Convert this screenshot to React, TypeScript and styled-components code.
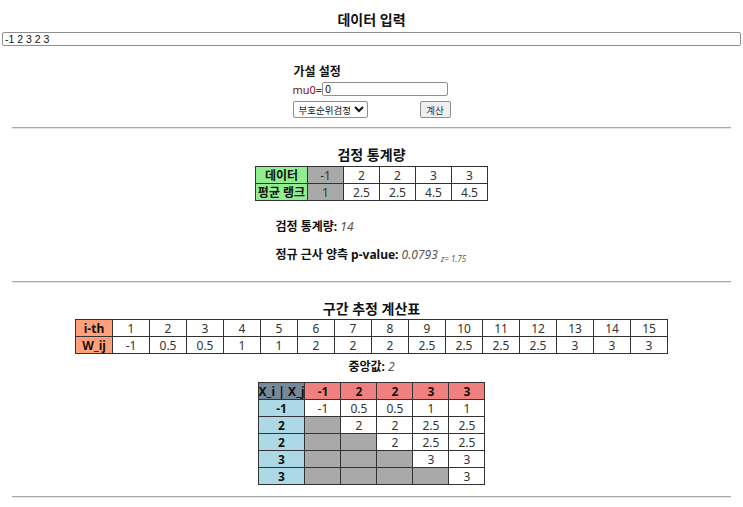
import styled, { createGlobalStyle } from "styled-components";

const GlobalStyle = createGlobalStyle`
  html, body {
    margin: 0;
    padding: 0;
    background: #fff;
  }
  body {
    font-family: "Noto Sans", "Noto Sans CJK KR", sans-serif;
    font-size: 12px;
    color: #111;
  }
`;

const Page = styled.div`
  padding: 0 2px;
`;

const Title = styled.h3<{ $top: number }>`
  margin: ${(p) => p.$top}px 0 0;
  font-size: 14px;
  line-height: 18px;
  text-align: center;
  font-weight: 700;
`;

const DataInput = styled.input`
  display: block;
  box-sizing: border-box;
  width: 100%;
  height: 14px;
  margin: 3px 0 0;
  padding: 0 2px;
  border: 1px solid #8f8f8f;
  border-radius: 2px;
  font-family: "Liberation Sans", sans-serif;
  font-size: 10.5px;
  color: #111;
`;

const Hypothesis = styled.div`
  width: 158px;
  margin: 18px auto 0;
  display: flex;
  flex-direction: column;
`;

const SubTitle = styled.div`
  font-weight: 700;
  font-size: 12px;
  line-height: 16px;
  padding-left: 1px;
`;

const MuRow = styled.label`
  display: flex;
  align-items: center;
  height: 16px;
  margin-top: 1px;
  color: #7a1010;
  font-size: 11px;
`;

const MuInput = styled.input`
  box-sizing: border-box;
  width: 126px;
  height: 14px;
  padding: 0 2px;
  border: 1px solid #8f8f8f;
  border-radius: 2px;
  font-family: "Liberation Sans", sans-serif;
  font-size: 10px;
`;

const ActionRow = styled.div`
  display: flex;
  justify-content: space-between;
  align-items: center;
  margin-top: 4px;
`;

const MethodSelect = styled.select`
  width: 75px;
  height: 17px;
  padding: 0 1px;
  border: 1px solid #8f8f8f;
  border-radius: 2px;
  background: #fff;
  font-family: "Noto Sans CJK KR", sans-serif;
  font-size: 9.5px;
  color: #111;
`;

const CalcButton = styled.button`
  width: 31px;
  height: 17px;
  padding: 0;
  border: 1px solid #8f8f8f;
  border-radius: 2px;
  background: #efefef;
  font-family: "Noto Sans CJK KR", sans-serif;
  font-size: 9.5px;
  color: #333;
`;

const Rule = styled.hr<{ $top: number }>`
  margin: ${(p) => p.$top}px 10px 0;
  border: 0;
  border-top: 1px solid #a8a8a8;
  border-bottom: 1px solid #e4e4e4;
`;

const Table = styled.table<{ $top: number }>`
  margin: ${(p) => p.$top}px auto 0;
  border-collapse: collapse;
  table-layout: fixed;
  border: 1px solid #666;
`;

const Cell = styled.td<{ $w: number; $bg?: string; $bold?: boolean }>`
  width: ${(p) => p.$w}px;
  height: 17px;
  padding: 0;
  box-sizing: border-box;
  border: 1px solid #333;
  background: ${(p) => p.$bg ?? "#fff"};
  font-weight: ${(p) => (p.$bold ? 700 : 400)};
  color: ${(p) => (p.$bold ? "#111" : "#333")};
  font-size: 12px;
  line-height: 15px;
  text-align: center;
  white-space: nowrap;
`;

const Stats = styled.div`
  width: 194px;
  margin: 18px auto 0;
  padding-left: 2px;
`;

const StatLine = styled.div<{ $top?: number }>`
  margin-top: ${(p) => p.$top ?? 0}px;
  line-height: 16px;
  font-size: 12px;
`;

const Label = styled.b`
  font-weight: 700;
`;

const Value = styled.i`
  color: #555;
  font-style: italic;
`;

const Small = styled.sub`
  font-size: 8px;
  color: #555;
  font-style: italic;
  vertical-align: -3px;
  margin-left: 3px;
`;

const Median = styled.div`
  margin-top: 5px;
  text-align: center;
  line-height: 16px;
  font-size: 12px;
`;

const GRAY = "#a9a9a9";
const GREEN = "#90ee90";
const SALMON = "#ffa07a";
const CORAL = "#f08080";
const BLUE = "#add8e6";
const SLATE = "#778899";

const data = [-1, 2, 2, 3, 3];
const ranks = [1, 2.5, 2.5, 4.5, 4.5];

const walsh: number[] = [];
data.forEach((a, i) => {
  data.forEach((b, j) => {
    if (j >= i) walsh.push((a + b) / 2);
  });
});
walsh.sort((a, b) => a - b);

export default function App() {
  return (
    <Page>
      <GlobalStyle />
      <Title $top={11}>데이터 입력</Title>
      <DataInput defaultValue="-1 2 3 2 3" />

      <Hypothesis>
        <SubTitle>가설 설정</SubTitle>
        <MuRow>
          mu0=
          <MuInput defaultValue="0" />
        </MuRow>
        <ActionRow>
          <MethodSelect defaultValue="signed">
            <option value="signed">부호순위검정</option>
            <option value="sign">부호검정</option>
          </MethodSelect>
          <CalcButton>계산</CalcButton>
        </ActionRow>
      </Hypothesis>

      <Rule $top={9} />

      <Title $top={17}>검정 통계량</Title>
      <Table $top={2}>
        <tbody>
          <tr>
            <Cell $w={52} $bg={GREEN} $bold>
              데이터
            </Cell>
            {data.map((v, i) => (
              <Cell key={i} $w={36} $bg={i === 0 ? GRAY : undefined}>
                {v}
              </Cell>
            ))}
          </tr>
          <tr>
            <Cell $w={52} $bg={GREEN} $bold>
              평균 랭크
            </Cell>
            {ranks.map((v, i) => (
              <Cell key={i} $w={36} $bg={i === 0 ? GRAY : undefined}>
                {v}
              </Cell>
            ))}
          </tr>
        </tbody>
      </Table>

      <Stats>
        <StatLine>
          <Label>검정 통계량:</Label> <Value>14</Value>
        </StatLine>
        <StatLine $top={12}>
          <Label>정규 근사 양측 p-value:</Label> <Value>0.0793</Value>
          <Small>z= 1.75</Small>
        </StatLine>
      </Stats>

      <Rule $top={14} />

      <Title $top={17}>구간 추정 계산표</Title>
      <Table $top={1}>
        <tbody>
          <tr>
            <Cell $w={37} $bg={SALMON} $bold>
              i-th
            </Cell>
            {walsh.map((_, i) => (
              <Cell key={i} $w={37}>
                {i + 1}
              </Cell>
            ))}
          </tr>
          <tr>
            <Cell $w={37} $bg={SALMON} $bold>
              W_ij
            </Cell>
            {walsh.map((v, i) => (
              <Cell key={i} $w={37}>
                {v}
              </Cell>
            ))}
          </tr>
        </tbody>
      </Table>

      <Median>
        <Label>중앙값:</Label> <Value>2</Value>
      </Median>

      <Table $top={7}>
        <tbody>
          <tr>
            <Cell $w={46} $bg={SLATE} $bold>
              X_i | X_j
            </Cell>
            {data.map((v, i) => (
              <Cell key={i} $w={36} $bg={CORAL} $bold>
                {v}
              </Cell>
            ))}
          </tr>
          {data.map((a, i) => (
            <tr key={i}>
              <Cell $w={46} $bg={BLUE} $bold>
                {a}
              </Cell>
              {data.map((b, j) =>
                j >= i ? (
                  <Cell key={j} $w={36}>
                    {(a + b) / 2}
                  </Cell>
                ) : (
                  <Cell key={j} $w={36} $bg={GRAY} />
                )
              )}
            </tr>
          ))}
        </tbody>
      </Table>

      <Rule $top={11} />
    </Page>
  );
}
